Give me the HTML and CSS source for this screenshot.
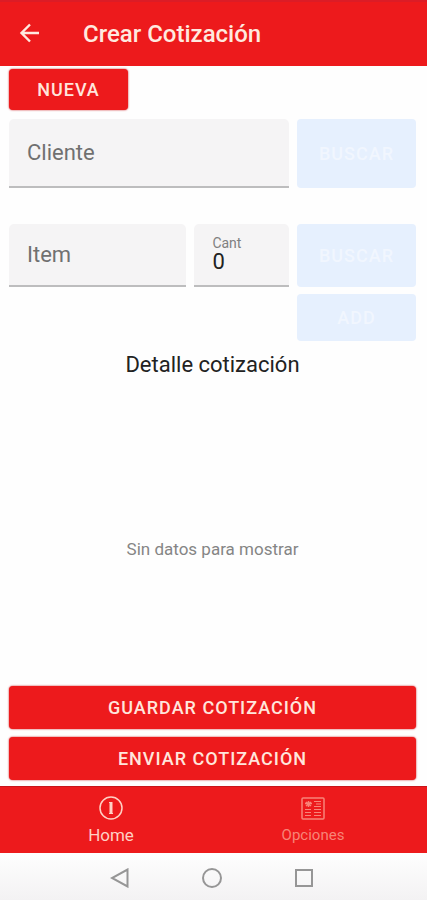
FILE: index.html
```html
<!DOCTYPE html>
<html lang="es">
<head>
    <meta charset="UTF-8">
    <meta name="viewport" content="width=device-width, initial-scale=1.0">
    <title>Crear Cotización</title>
    <link rel="stylesheet" href="styles.css">
</head>
<body>
    <header class="app-bar">
        <button class="back" type="button" aria-label="Volver">
            <svg width="24" height="24" viewBox="0 0 24 24" fill="none" stroke="currentColor" stroke-width="2.400">
                <path d="M21 11H4M12 2.500L3.500 11l8.500 8.500"/>
            </svg>
        </button>
        <h1>Crear Cotización</h1>
    </header>

    <main class="content">
        <button class="btn btn-new" type="button">NUEVA</button>

        <form class="quote-form">
            <div class="row row-client">
                <input class="field" type="text" name="cliente" placeholder="Cliente" aria-label="Cliente">
                <button class="btn btn-disabled" type="button" disabled>BUSCAR</button>
            </div>
            <div class="row row-item">
                <input class="field" type="text" name="item" placeholder="Item" aria-label="Item">
                <div class="field field-qty">
                    <label for="cant">Cant</label>
                    <input type="text" id="cant" name="cant" value="0" inputmode="numeric">
                </div>
                <button class="btn btn-disabled" type="button" disabled>BUSCAR</button>
            </div>
            <div class="row row-add">
                <button class="btn btn-disabled" type="button" disabled>ADD</button>
            </div>
        </form>

        <h2>Detalle cotización</h2>
        <div class="empty">Sin datos para mostrar</div>

        <div class="actions">
            <button class="btn" type="button">GUARDAR COTIZACIÓN</button>
            <button class="btn" type="button">ENVIAR COTIZACIÓN</button>
        </div>
    </main>

    <nav class="tabs">
        <a class="tab active" href="#home">
            <svg width="26" height="26" viewBox="0 0 26 26" fill="none" stroke="currentColor">
                <circle cx="13" cy="13" r="11" stroke-width="1.500"/>
                <path d="M13 7v12" stroke-width="3"/>
                <path d="M11 7.500h3M11 18.500h4"/>
            </svg>
            <span>Home</span>
        </a>
        <a class="tab" href="#opciones">
            <svg width="26" height="26" viewBox="0 0 26 26" fill="none" stroke="currentColor">
                <rect x="2" y="3" width="22" height="21" rx="1" stroke-width="1.500"/>
                <path d="M5 8.500h7M8.500 6v6M6 7l5 4M6 11l5-4" stroke-width="1.500"/>
                <path d="M14 6.500h7M16 9h5M14 11.500h7M5 14.500h6M14 14.500h7M5 17.500h6M14 17.500h7M5 20.500h6M14 20.500h7"/>
            </svg>
            <span>Opciones</span>
        </a>
    </nav>

    <!-- Android system buttons -->
    <div class="system-bar">
        <button type="button" aria-label="Atrás">
            <svg width="20" height="20" viewBox="0 0 20 20"><path d="M17.500 1.500v17L2 10z"/></svg>
        </button>
        <button type="button" aria-label="Inicio">
            <svg width="20" height="20" viewBox="0 0 20 20"><circle cx="10" cy="10" r="9"/></svg>
        </button>
        <button type="button" aria-label="Recientes">
            <svg width="20" height="20" viewBox="0 0 20 20"><rect x="2" y="2" width="16" height="16"/></svg>
        </button>
    </div>
</body>
</html>
```

FILE: styles.css
```css
* {
    box-sizing: border-box;
}

body {
    display: flex;
    flex-direction: column;
    min-height: 100vh;
    margin: 0;
    font-family: Roboto, sans-serif;
    background-color: #fefefe;
    color: #222;
}

button,
input {
    font-family: inherit;
}

/* Header */
.app-bar {
    display: flex;
    align-items: center;
    gap: 41px;
    height: 66px;
    padding: 0 18px;
    background-color: #ed1a1c;
    border-top: 2px solid #dc1c26;
    color: #ffe9df;
}

.back {
    display: flex;
    padding: 0;
    border: none;
    background: none;
    color: inherit;
}

h1 {
    margin: 0;
    font-size: 24px;
    font-weight: 500;
    line-height: 28px;
}

/* Form */
.content {
    display: flex;
    flex-direction: column;
    flex: 1;
    padding: 3px 11px 6px 9px;
}

.btn {
    height: 43px;
    padding: 0;
    border: none;
    border-radius: 4px;
    background-color: #ed1a1c;
    box-shadow: 0 0 2px #c8141a;
    color: #ffe6dc;
    font-size: 18px;
    font-weight: 500;
    letter-spacing: 1px;
}

.btn-new {
    width: 119px;
    height: 41px;
}

.btn-disabled {
    height: auto;
    background-color: #e6f0fe;
    box-shadow: none;
    color: #f1f6fe;
}

.quote-form {
    margin-top: 9px;
}

.row {
    display: grid;
    gap: 8px;
}

.row-client {
    grid-template-columns: 1fr 119px;
    height: 69px;
    margin-bottom: 36px;
}

.row-item {
    grid-template-columns: 15fr 8fr 119px;
    height: 63px;
    margin-bottom: 7px;
}

.row-add {
    grid-template-columns: 119px;
    justify-content: end;
    height: 47px;
}

.field {
    width: 100%;
    min-width: 0;
    padding: 0 18px;
    border: none;
    border-bottom: 2px solid #bdbdbe;
    border-radius: 5px 5px 0 0;
    background-color: #f5f4f5;
    font-size: 22px;
}

.field::placeholder {
    color: #707070;
    opacity: 1;
}

.field-qty {
    padding-top: 11px;
}

.field-qty label {
    display: block;
    color: #808080;
    font-size: 14px;
    line-height: 16px;
}

.field-qty input {
    display: block;
    width: 100%;
    height: 20px;
    padding: 0;
    border: none;
    background: none;
    color: #222;
    font-size: 22px;
}

h2 {
    margin: 9px 0 0;
    font-size: 22px;
    font-weight: 400;
    line-height: 30px;
    text-align: center;
}

.empty {
    display: flex;
    align-items: center;
    justify-content: center;
    flex: 1;
    padding-top: 32px;
    color: #858585;
    font-size: 17px;
}

.actions {
    display: flex;
    flex-direction: column;
    gap: 8px;
}

/* Bottom navigation */
.tabs {
    display: flex;
    height: 67px;
    padding: 8px 13px 0 10px;
    background-color: #ed1a1c;
    border-top: 1px solid #c8141a;
}

.tab {
    display: flex;
    flex: 1;
    flex-direction: column;
    align-items: center;
    gap: 4px;
    color: #f88478;
    font-size: 15px;
    line-height: 20px;
    text-decoration: none;
}

.tab.active {
    color: #ffd0c4;
    font-size: 17px;
}

.system-bar {
    display: flex;
    align-items: center;
    justify-content: center;
    gap: 72px;
    height: 47px;
    padding: 3px 3px 0 0;
    background: linear-gradient(#fefefe, #f3f2f3);
}

.system-bar button {
    display: flex;
    padding: 0;
    border: none;
    background: none;
}

.system-bar svg {
    fill: none;
    stroke: #969696;
    stroke-width: 2;
}
```
